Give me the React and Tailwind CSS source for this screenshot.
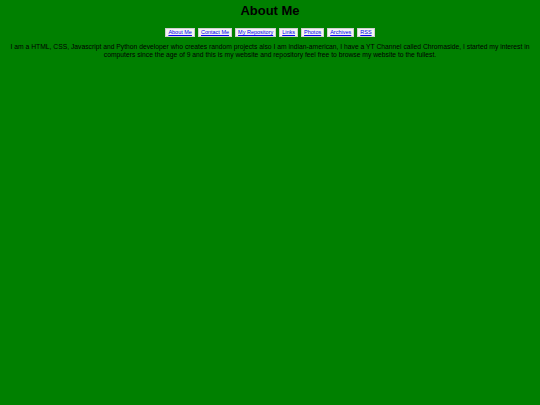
export default function App() {
  const links = ["About Me", "Contact Me", "My Repository", "Links", "Photos", "Archives", "RSS"];
  return (
    <div className="min-h-[405px] w-full bg-[#008000] text-black" style={{ fontFamily: '"Liberation Sans", Arial, sans-serif' }}>
      <h1 className="pt-[3px] text-center text-[13px] font-bold leading-[16px]">About Me</h1>
      <nav className="mt-[9px] flex justify-center gap-[3px]">
        {links.map((l) => (
          <a key={l} href="#" className="border border-[#cfcfcf] bg-[#f4f4f4] px-[2px] text-[5.5px] leading-[7px] text-[#0000ee] underline">
            {l}
          </a>
        ))}
      </nav>
      <p className="mx-auto mt-[6px] px-[8px] text-center text-[6.75px] leading-[8px]">
        I am a HTML, CSS, Javascript and Python developer who creates random projects also I am indian-american, I have a YT Channel called Chromaside, I started my interest in computers since the age of 9 and this is my website and repository feel free to browse my website to the fullest.
      </p>
    </div>
  );
}
